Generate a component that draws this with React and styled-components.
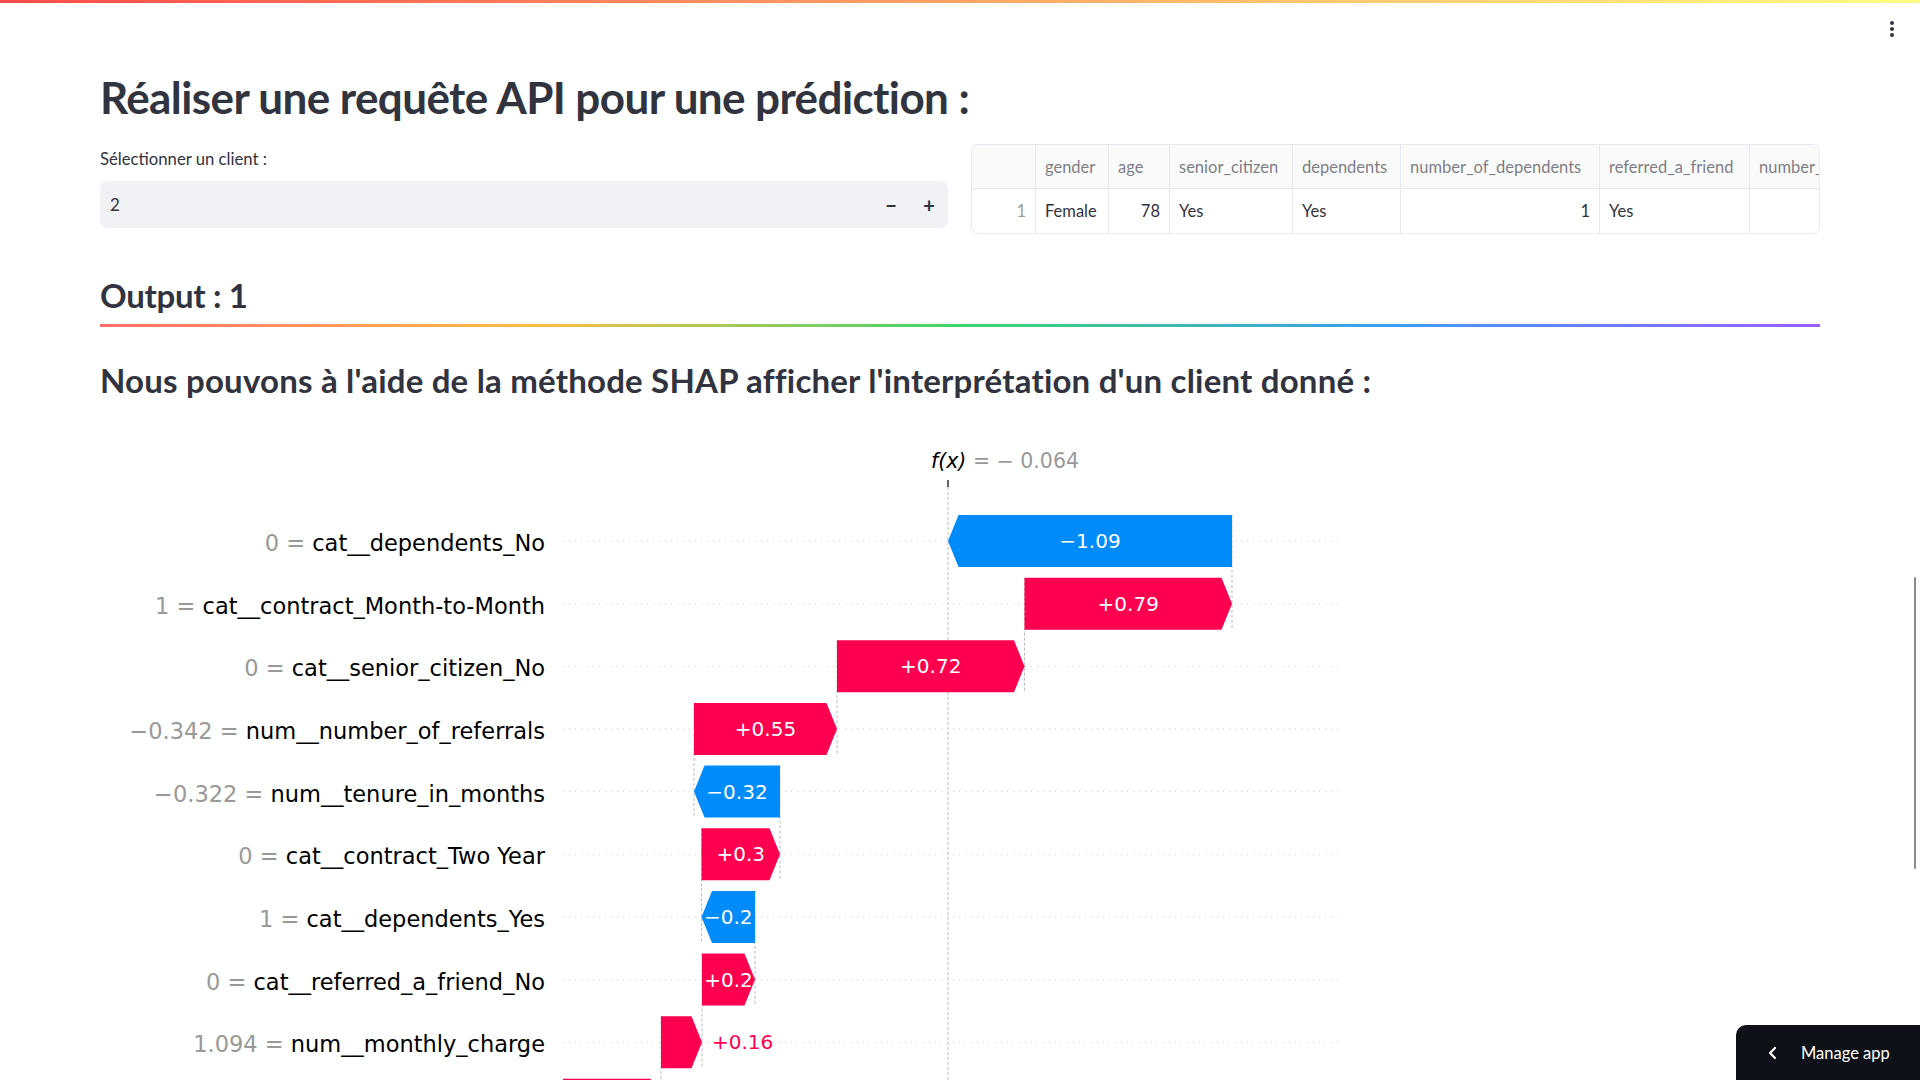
import React from 'react';
import styled, { createGlobalStyle } from 'styled-components';

const GlobalStyle = createGlobalStyle`
  html, body {
    margin: 0;
    padding: 0;
    overflow: hidden;
    background: #ffffff;
    font-family: "Lato", "Open Sans", sans-serif;
    color: #31333f;
  }
`

const Decoration = styled.div`
  position: fixed;
  top: 0;
  left: 0;
  right: 0;
  height: 3px;
  background: linear-gradient(90deg, #ff4b4b, #fffd80);
`

const MenuButton = styled.div`
  position: fixed;
  top: 21px;
  right: 26px;
  display: flex;
  flex-direction: column;
  gap: 2px;

  span {
    width: 4px;
    height: 4px;
    border-radius: 50%;
    background: #31333f;
  }
`

const ScrollThumb = styled.div`
  position: fixed;
  right: 4px;
  top: 577px;
  width: 2px;
  height: 292px;
  background: #8a8a8a;
  border-radius: 1px;
`

const Main = styled.main`
  padding: 67px 100px 0 100px;
  width: 1720px;
`

const Title = styled.h1`
  margin: 0;
  font-size: 44px;
  line-height: 60px;
  font-weight: 700;
  letter-spacing: -0.6px;
`

const TopRow = styled.div`
  display: grid;
  grid-template-columns: 848px 849px;
  gap: 23px;
  margin-top: 17px;
`

const InputColumn = styled.div`
  padding-top: 5px;
`

const Label = styled.label`
  display: block;
  font-size: 16.7px;
  line-height: 20px;
  margin-bottom: 12px;
`

const NumberInput = styled.div`
  display: flex;
  align-items: center;
  height: 47px;
  border-radius: 8px;
  background: #f0f2f6;
  padding: 0 0 0 10px;
  font-size: 17px;
`

const InputValue = styled.span`
  flex: 1;
`

const StepButton = styled.span`
  width: 38px;
  text-align: center;
  font-size: 20px;
  font-weight: 700;
`

const Table = styled.div`
  border: 1px solid #e6e9ef;
  border-radius: 7px;
  overflow: hidden;
  font-size: 16.5px;
  height: 88px;
`

const TableRow = styled.div`
  display: grid;
  grid-template-columns: 64px 73px 61px 123px 108px 199px 150px 71px;
  height: ${p => (p.$header ? '43px' : '44px')};
  background: ${p => (p.$header ? '#fafafb' : '#ffffff')};
  color: ${p => (p.$header ? 'rgba(49, 51, 63, 0.65)' : '#31333f')};
  border-bottom: ${p => (p.$header ? '1px solid #e6e9ef' : 'none')};
`

const Cell = styled.div`
  display: flex;
  align-items: center;
  justify-content: ${p => (p.$right ? 'flex-end' : 'flex-start')};
  padding: 0 9px;
  border-right: 1px solid #e6e9ef;
  white-space: nowrap;
  overflow: hidden;
  color: ${p => (p.$muted ? 'rgba(49, 51, 63, 0.5)' : 'inherit')};
`

const SubHeading = styled.h3`
  margin: ${p => p.$top}px 0 0 0;
  font-size: 33px;
  line-height: 42px;
  font-weight: 700;
  letter-spacing: ${p => p.$spacing}px;
`

const Divider = styled.hr`
  margin: 8px 0 0 0;
  border: none;
  height: 3px;
  background: linear-gradient(90deg, #ff6c6c, #ffbd45, #3dd56d, #3d9df3, #9a5dff);
`

const Chart = styled.svg`
  display: block;
  margin-top: 29px;
  overflow: visible;
  font-family: "DejaVu Sans", sans-serif;
`

const ManageApp = styled.div`
  position: fixed;
  right: 0;
  bottom: 0;
  width: 184px;
  height: 55px;
  background: #0e1117;
  border-top-left-radius: 10px;
  display: flex;
  align-items: center;
  gap: 21px;
  padding-left: 30px;
  box-sizing: border-box;
  color: #ffffff;
  font-size: 16.5px;
`

const columns = ['', 'gender', 'age', 'senior_citizen', 'dependents', 'number_of_dependents', 'referred_a_friend', 'number_']
const values = [
  { v: '1', right: true, muted: true },
  { v: 'Female' },
  { v: '78', right: true },
  { v: 'Yes' },
  { v: 'Yes' },
  { v: '1', right: true },
  { v: 'Yes' },
  { v: '' },
]

// positions along the x axis, page pixels: p[0] = f(x)
const pos = [948, 1232, 1024.5, 837, 694, 780, 701.5, 755, 702, 661, 563]
const rows = [
  { val: '0', name: 'cat__dependents_No', text: '\u22121.09' },
  { val: '1', name: 'cat__contract_Month-to-Month', text: '+0.79' },
  { val: '0', name: 'cat__senior_citizen_No', text: '+0.72' },
  { val: '\u22120.342', name: 'num__number_of_referrals', text: '+0.55' },
  { val: '\u22120.322', name: 'num__tenure_in_months', text: '\u22120.32' },
  { val: '0', name: 'cat__contract_Two Year', text: '+0.3' },
  { val: '1', name: 'cat__dependents_Yes', text: '\u22120.2' },
  { val: '0', name: 'cat__referred_a_friend_No', text: '+0.2' },
  { val: '1.094', name: 'num__monthly_charge', text: '+0.16', outside: true },
  { val: '', name: '', text: '' },
]

const RED = '#ff0051'
const BLUE = '#008bfb'
const OX = 100
const OY = 430
const ROW0 = 541
const STEP = 62.65
const HALF = 26
const TIP = 10.5

const arrow = (a, b, c) => {
  const d = Math.min(TIP, Math.abs(b - a))
  const s = b > a ? -d : d
  return [
    [a, c - HALF], [b + s, c - HALF], [b, c], [b + s, c + HALF], [a, c + HALF],
  ].map(([x, y]) => `${x - OX},${y - OY}`).join(' ')
}

const Waterfall = () => (
  <Chart width="1720" height="700" viewBox="0 0 1720 700">
    <line x1={948 - OX} y1={487 - OY} x2={948 - OX} y2={1140 - OY} stroke="#bbbbbb" strokeDasharray="3 2" />
    {rows.map((r, i) => {
      const c = ROW0 + STEP * i - OY
      return (
        <line key={'g' + i} x1={563 - OX} y1={c} x2={1341 - OX} y2={c} stroke="#cccccc" strokeDasharray="1 5" />
      )
    })}
    {rows.slice(0, 9).map((r, i) => {
      const c = ROW0 + STEP * i
      const x = pos[i + 1] - OX
      return (
        <line key={'d' + i} x1={x} y1={c - HALF - OY} x2={x} y2={c + STEP + HALF - OY} stroke="#bbbbbb" strokeDasharray="3 2" />
      )
    })}
    {rows.map((r, i) => {
      const c = ROW0 + STEP * i
      const a = pos[i + 1]
      const b = pos[i]
      const color = b > a ? RED : BLUE
      return (
        <g key={'b' + i}>
          <polygon points={arrow(a, b, c)} fill={color} />
          {r.text && !r.outside && (
            <text x={(a + b) / 2 - OX} y={c - OY} fill="#ffffff" fontSize="20" textAnchor="middle" dominantBaseline="central">
              {r.text}
            </text>
          )}
          {r.outside && (
            <text x={b + 10 - OX} y={c - OY} fill={color} fontSize="20" dominantBaseline="central">
              {r.text}
            </text>
          )}
          {r.name && (
            <text x={545 - OX} y={c + 2 - OY} fontSize="22.5" textAnchor="end" dominantBaseline="central">
              <tspan fill="#999999">{r.val} = </tspan>
              <tspan fill="#000000">{r.name}</tspan>
            </text>
          )}
        </g>
      )
    })}
    <line x1={948 - OX} y1={480 - OY} x2={948 - OX} y2={487 - OY} stroke="#000000" strokeWidth="1.2" />
    <text x={931 - OX} y={468 - OY} fontSize="20.5">
      <tspan fill="#000000" fontStyle="italic">f(x)</tspan>
      <tspan fill="#999999"> = {'\u2212'} 0.064</tspan>
    </text>
  </Chart>
)

export default function App() {
  return (
    <>
      <GlobalStyle />
      <Decoration />
      <MenuButton><span /><span /><span /></MenuButton>
      <Main>
        <Title>Réaliser une requête API pour une prédiction :</Title>
        <TopRow>
          <InputColumn>
            <Label>Sélectionner un client :</Label>
            <NumberInput>
              <InputValue>2</InputValue>
              <StepButton>−</StepButton>
              <StepButton>+</StepButton>
            </NumberInput>
          </InputColumn>
          <Table>
            <TableRow $header>
              {columns.map((c, i) => <Cell key={i}>{c}</Cell>)}
            </TableRow>
            <TableRow>
              {values.map((c, i) => <Cell key={i} $right={c.right} $muted={c.muted}>{c.v}</Cell>)}
            </TableRow>
          </Table>
        </TopRow>
        <SubHeading $top={40} $spacing={-0.3}>Output : 1</SubHeading>
        <Divider />
        <SubHeading $top={32} $spacing={0.2}>Nous pouvons à l'aide de la méthode SHAP afficher l'interprétation d'un client donné :</SubHeading>
        <Waterfall />
      </Main>
      <ScrollThumb />
      <ManageApp>
        <svg width="14" height="14" viewBox="0 0 14 14">
          <path d="M9 2 L4 7 L9 12" fill="none" stroke="#ffffff" strokeWidth="2.2" strokeLinecap="round" strokeLinejoin="round" />
        </svg>
        Manage app
      </ManageApp>
    </>
  )
}
